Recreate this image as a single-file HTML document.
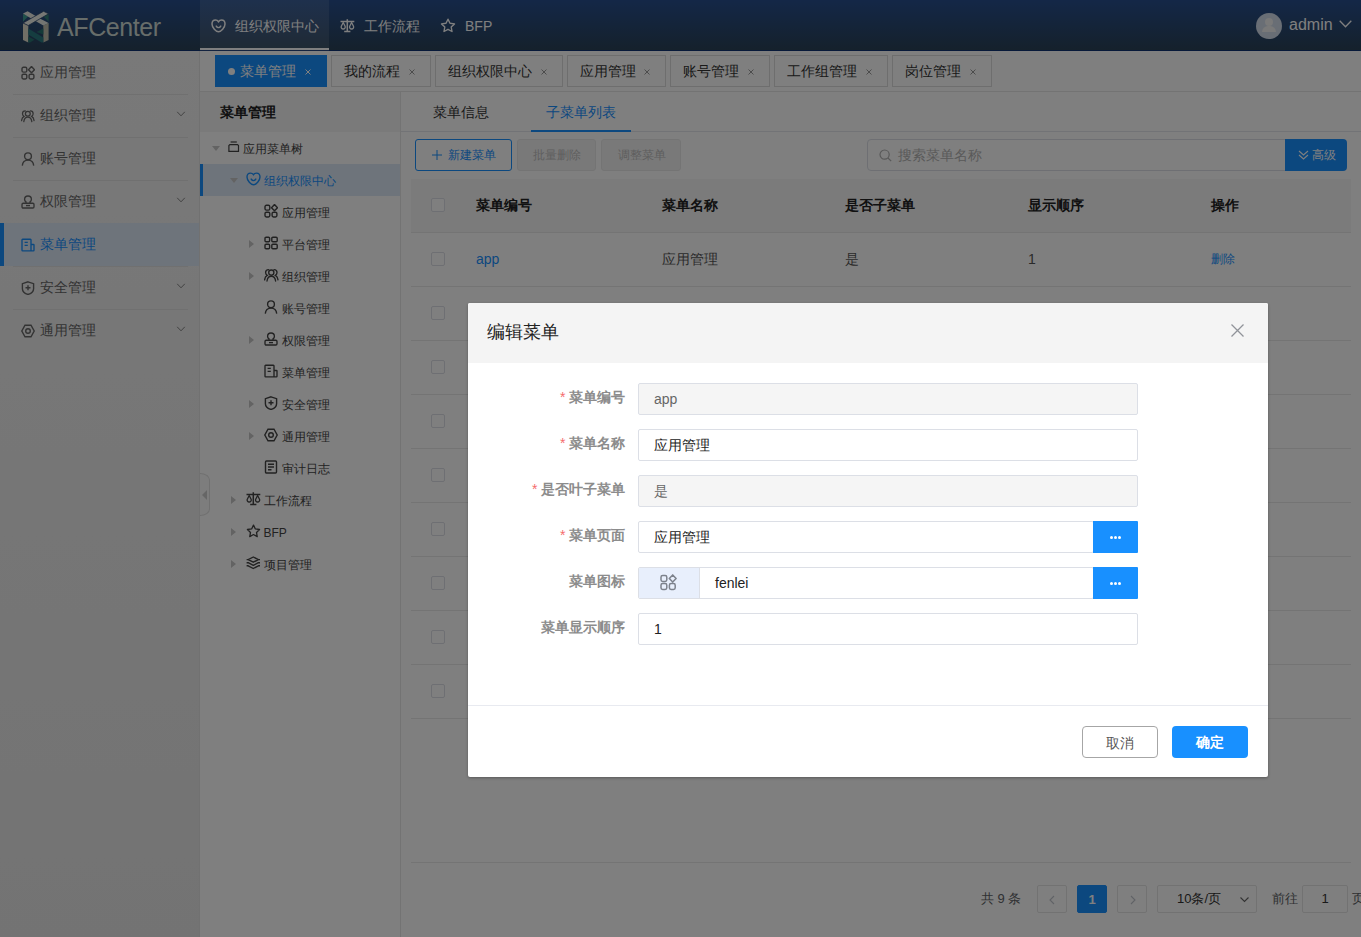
<!DOCTYPE html>
<html><head><meta charset="utf-8">
<style>
*{box-sizing:border-box;margin:0;padding:0}
html,body{width:1361px;height:937px;overflow:hidden;background:#fff;font-family:"Liberation Sans",sans-serif;font-size:14px;color:#333}
.a{position:absolute}
#hdr{left:0;top:0;width:1361px;height:51px;background:linear-gradient(to bottom,#284f8f,#2a4258);border-bottom:1px solid #0e3273}
#side{left:0;top:51px;width:200px;height:886px;background:linear-gradient(to bottom,#f2f2f2,#e7e7e7);border-right:1px solid #e2e2e2}
.mi{position:absolute;left:0;width:199px;height:43px;color:#666;font-size:14px}
.mi .t{position:absolute;left:40px;top:0;line-height:43px}
.mi .ic{position:absolute;left:21px;top:15px;width:14px;height:14px}
.mi .dv{position:absolute;left:13px;right:11px;top:0;height:1px;background:#e0e0e0}
.mi .ch{position:absolute;left:176px;top:17px;color:#777}
.sel{background:#dde9f6;color:#1890ff}
.sel:before{content:"";position:absolute;left:0;top:0;width:4px;height:43px;background:#1890ff}
svg{display:block}

.tab{position:absolute;top:4px;height:32px;border:1px solid #dcdcdc;background:#fff;color:#333;font-size:14px}
.tab span{position:absolute;left:12px;top:0;line-height:30px;white-space:nowrap}
.tab .x{position:absolute;right:15px;top:13px;color:#999;width:6px;height:6px}
.tab.act{background:#1890ff;border-color:#1890ff;color:#fff}
.tab.act .x{color:#fff}
.tab .dot{position:absolute;left:12px;top:12px;width:7px;height:7px;border-radius:50%;background:#fff}

.tr{position:absolute;left:0;width:200px;height:32px;color:#444;font-size:12px}
.tr span{position:absolute;top:1px;line-height:32px;white-space:nowrap}
.tr .tic{position:absolute;top:8px;margin-left:1px}
.tri-d{position:absolute;top:14px;width:0;height:0;border-left:4px solid transparent;border-right:4px solid transparent;border-top:5px solid #c6c6c6}
.tri-r{position:absolute;top:12px;width:0;height:0;border-top:4px solid transparent;border-bottom:4px solid transparent;border-left:5px solid #c6c6c6}
.sel2{background:#dde9f6;color:#1890ff}
.sel2:before{content:"";position:absolute;left:0;top:0;width:3px;height:32px;background:#1890ff}

.btn{position:absolute;top:47px;height:32px;border:1px solid #e4e4e4;border-radius:3px;font-size:12px;background:#fff}
.btn span{position:absolute;top:0;line-height:30px;white-space:nowrap}
.btn.dis{background:#f3f3f3;color:#bdbdbd;border-color:#e9e9e9}
.cb{position:absolute;left:30px;width:14px;height:14px;border:1px solid #dcdfe6;border-radius:2px;background:#fff}
.th{line-height:54px;font-weight:bold;color:#222;font-size:14px;white-space:nowrap}
.td{line-height:53px;color:#555;font-size:14px;white-space:nowrap}
.pg{position:absolute;top:793px;width:30px;height:28px;border:1px solid #e4e4e4;border-radius:2px;background:#fff}

.flab{position:absolute;right:643px;height:32px;line-height:29px;font-size:14px;font-weight:bold;color:#8c8c8c;white-space:nowrap}
.req{height:32px;line-height:29px;color:#f56c6c;font-size:14px}
.inp{position:absolute;left:170px;width:500px;height:32px;border:1px solid #dcdfe6;border-radius:2px;background:#fff;color:#222;font-size:14px;overflow:hidden}
.inp span{position:absolute;top:0;line-height:30px;white-space:nowrap}
.dots{position:absolute;left:625px;width:45px;height:32px;background:#1890ff;border-radius:0 1px 1px 0}
.dots i{position:absolute;top:15px;width:3px;height:3px;border-radius:50%;background:#fff}
.dots i:nth-child(1){left:17px}.dots i:nth-child(2){left:21px}.dots i:nth-child(3){left:25px}
.mbtn{height:32px;border-radius:4px;text-align:center;line-height:33px;font-size:14px}
</style></head><body>
<div id="hdr" class="a">
 <svg class="a" style="left:23px;top:11px" width="26" height="32" viewBox="0 0 26 32">
  <polygon points="0,2.8 5.3,5.3 0,10.8" fill="#3f9d92"/>
  <polygon points="25.6,2.8 20.3,5.3 25.6,10.8" fill="#338078"/>
  <polygon points="0,12 5.3,14.5 5.3,31.5 0,29" fill="#e2dfcc"/>
  <polygon points="25.6,12 20.3,14.5 20.3,31.5 25.6,29" fill="#c2c1ae"/>
  <polygon points="5.3,17.5 20.3,26.5 20.3,31.5 18.5,31.5 5.3,23.5" fill="#2a7a80"/>
  <polygon points="20.3,17.5 20.3,23.5 13.5,21" fill="#297470"/>
  <polygon points="5.3,31.5 5.3,25.5 11.5,28.8 7,31.5" fill="#297470"/>
  <polygon points="0,2.6 4.6,0.3 14,5.8 9.4,8.2" fill="#e8ebe5"/>
  <polygon points="16.2,7.2 20.8,9.5 25.6,12 20.3,14.5 11.6,9.6" fill="#e8ebe5"/>
  <polygon points="20.6,0.3 25.6,2.8 5.3,14.5 0,12" fill="#eef0ea" stroke="#213f6c" stroke-width="0.7"/>
 </svg>
 <div class="a" style="left:57px;top:10px;font-size:25px;line-height:34px;color:#cfdad4;letter-spacing:-0.4px">AFCenter</div>
 <div class="a" style="left:200px;top:0;width:129px;height:51px;background:rgba(255,255,255,.1)"></div>
 <div class="a" style="left:200px;top:48px;width:129px;height:2px;background:#fff"></div>
 <svg class="a" style="left:211px;top:19px" width="15" height="14" viewBox="0 0 15 14"><path d="M7.5 2.7C6.8 1.7 5.8 1.1 4.5 1.1 2.6 1.1 1 2.7 1 5.1c0 3.6 4 7.7 6.5 7.7s6.5-4.1 6.5-7.7c0-2.4-1.6-4-3.5-4-1.3 0-2.3.6-3 1.6z" fill="none" stroke="#fff" stroke-width="1.5"/><path d="M5.2 7.1c.6 1 1.4 1.5 2.3 1.5s1.7-.5 2.3-1.5" fill="none" stroke="#fff" stroke-width="1.4" stroke-linecap="round"/></svg>
 <div class="a" style="left:235px;top:1px;line-height:51px;color:#fff;font-size:14px">组织权限中心</div>
 <svg class="a" style="left:340px;top:19px" width="15" height="14" viewBox="0 0 15 14"><use href="#i-scale" style="color:#fff"/></svg>
 <div class="a" style="left:364px;top:1px;line-height:51px;color:#fff;font-size:14px">工作流程</div>
 <svg class="a" style="left:440px;top:18px" width="16" height="15" viewBox="0 0 16 15"><path d="M8 1.2l2 4.1 4.5.6-3.3 3.1.8 4.5L8 11.3l-4 2.2.8-4.5L1.5 5.9l4.5-.6z" fill="none" stroke="#fff" stroke-width="1.4" stroke-linejoin="round"/></svg>
 <div class="a" style="left:465px;top:1px;line-height:51px;color:#fff;font-size:14px">BFP</div>
 <div class="a" style="left:1256px;top:13px;width:26px;height:26px;border-radius:50%;background:#d2dcea;overflow:hidden">
  <div class="a" style="left:9px;top:5px;width:8px;height:8px;border-radius:50%;background:#f2f2f2"></div>
  <div class="a" style="left:6px;top:13px;width:14px;height:6px;border-radius:7px 7px 0 0;background:#f2f2f2"></div>
 </div>
 <div class="a" style="left:1289px;top:9px;line-height:32px;color:#fff;font-size:16px">admin</div>
 <svg class="a" style="left:1339px;top:20px" width="13" height="8" viewBox="0 0 13 8"><path d="M.7.7l5.8 6 5.8-6" fill="none" stroke="#fff" stroke-width="1.3"/></svg>
</div>
<svg width="0" height="0" style="position:absolute">
<defs>
<symbol id="i-grid" viewBox="0 0 14 14"><g fill="none" stroke="currentColor" stroke-width="1.4" stroke-linejoin="round"><rect x="1" y="1.3" width="4.8" height="4.8" rx="1.4"/><path d="M10.5.6l3 3.1-3 3.1-3-3.1z"/><rect x="1" y="8.2" width="4.8" height="4.8" rx="1.4"/><rect x="8.1" y="8.2" width="4.8" height="4.8" rx="1.4"/></g></symbol>
<symbol id="i-grid2" viewBox="0 0 14 14"><g fill="none" stroke="currentColor" stroke-width="1.4"><rect x="1" y="1.2" width="4.6" height="4.6" rx="1.1"/><rect x="7.8" y="1.2" width="5.4" height="4.6" rx="1.1"/><rect x="1" y="8.2" width="4.6" height="4.6" rx="1.1"/><rect x="7.8" y="8.2" width="5.4" height="4.6" rx="1.1"/></g></symbol>
<symbol id="i-group" viewBox="0 0 15 14"><g fill="none" stroke="currentColor" stroke-width="1.35" stroke-linecap="round"><circle cx="7.3" cy="4.6" r="2.6"/><path d="M3 13c.4-3 2.1-4.8 4.3-4.8s3.9 1.8 4.3 4.8"/><path d="M4.6 1.6C2.9 1.6 1.6 3 1.6 4.6c0 1.2.6 2.2 1.6 2.8C1.7 8.2.8 9.8.6 11.9"/><path d="M10 1.6c1.7 0 3 1.4 3 3 0 1.2-.6 2.2-1.6 2.8 1.5.8 2.4 2.4 2.6 4.5"/></g></symbol>
<symbol id="i-user" viewBox="0 0 14 14"><g fill="none" stroke="currentColor" stroke-width="1.4"><circle cx="7" cy="4.3" r="3.4"/><path d="M1.3 13.6c.3-3.4 2.7-5.5 5.7-5.5s5.4 2.1 5.7 5.5"/></g></symbol>
<symbol id="i-stamp" viewBox="0 0 14 14"><g fill="none" stroke="currentColor" stroke-width="1.35"><path d="M5 8.2V6.9C4 6.3 3.6 5.4 3.6 4.4 3.6 2.4 5.1 1 7 1s3.4 1.4 3.4 3.4c0 1-.4 1.9-1.4 2.5v1.3"/><rect x="1" y="8.2" width="12" height="4.8" rx="1.2"/><path d="M5 10.6h4"/></g></symbol>
<symbol id="i-doc" viewBox="0 0 14 14"><g fill="none" stroke="currentColor" stroke-width="1.35" stroke-linejoin="round"><path d="M10 12.8H1.6a.6.6 0 0 1-.6-.6V1.8a.6.6 0 0 1 .6-.6h7.8a.6.6 0 0 1 .6.6zM10 6.5h2.4a.6.6 0 0 1 .6.6v5.1a.6.6 0 0 1-.6.6H10"/><path d="M3.6 4.3h3.2M3.6 7.4h3.2"/></g></symbol>
<symbol id="i-shield" viewBox="0 0 14 14"><g fill="none" stroke="currentColor" stroke-width="1.4"><path d="M7 .8l5.6 1.9v5c0 2.8-2.2 4.7-5.6 5.8C3.6 12.4 1.4 10.5 1.4 7.7v-5z"/><path d="M7 4.3v5M4.5 6.8h5"/></g></symbol>
<symbol id="i-nut" viewBox="0 0 14 14"><g fill="none" stroke="currentColor" stroke-width="1.4"><path d="M4 1.2h6L13.2 7 10 12.8H4L.8 7z"/><circle cx="7" cy="7" r="2.3"/></g></symbol>
<symbol id="i-heart" viewBox="0 0 15 14"><g fill="none" stroke="currentColor" stroke-width="1.4"><path d="M7.5 2.7C6.8 1.7 5.8 1.1 4.5 1.1 2.6 1.1 1 2.7 1 5.1c0 3.6 4 7.7 6.5 7.7s6.5-4.1 6.5-7.7c0-2.4-1.6-4-3.5-4-1.3 0-2.3.6-3 1.6z"/><path d="M5.2 7.1c.6 1 1.4 1.5 2.3 1.5s1.7-.5 2.3-1.5" stroke-linecap="round"/></g></symbol>
<symbol id="i-scale" viewBox="0 0 15 14"><g fill="none" stroke="currentColor"><path d="M7.3 .3v12.4M0.5 2.6h13.8M4.2 12.6h6.2" stroke-width="1.5"/><path d="M3.2 3.5L1.3 7.2A2.05 2.05 0 1 0 5.1 7.2ZM11.6 3.5L9.7 7.2A2.05 2.05 0 1 0 13.5 7.2Z" stroke-width="1.3" stroke-linejoin="round"/></g></symbol>
<symbol id="i-star" viewBox="0 0 16 15"><path d="M8 1.2l2 4.1 4.5.6-3.3 3.1.8 4.5L8 11.3l-4 2.2.8-4.5L1.5 5.9l4.5-.6z" fill="none" stroke="currentColor" stroke-width="1.4" stroke-linejoin="round"/></symbol>
<symbol id="i-log" viewBox="0 0 14 14"><g fill="none" stroke="currentColor" stroke-width="1.4"><rect x="1.5" y="1" width="11" height="12" rx="1"/><path d="M4 4.2h6M4 7h6M4 9.8h3.5"/></g></symbol>
<symbol id="i-layers" viewBox="0 0 15 14"><g fill="none" stroke="currentColor" stroke-width="1.4" stroke-linejoin="round"><path d="M.6 3.6h1.6L7.3 1l5.1 2.6H14M2.2 3.6l5.1 2.6 5.1-2.6"/><path d="M.6 6.7h1.6l5.1 2.6 5.1-2.6H14"/><path d="M.6 9.8h1.6l5.1 2.7 5.1-2.7H14"/></g></symbol>
<symbol id="i-box" viewBox="0 0 12 12"><g fill="none" stroke="currentColor" stroke-width="1.2"><path d="M2.6 1h6.2"/><path d="M1.9 3.6h7.6l1 1v5.8H.9V4.6z"/></g></symbol>
<symbol id="i-chev" viewBox="0 0 12 8"><path d="M.8 1l5.2 5.4L11.2 1" fill="none" stroke="currentColor" stroke-width="1.2"/></symbol>
</defs></svg>
<div id="side" class="a"><div class="mi" style="top:0px"><svg class="ic"><use href="#i-grid"/></svg><span class="t">应用管理</span></div><div class="mi" style="top:43px"><div class="dv"></div><svg class="ic"><use href="#i-group"/></svg><span class="t">组织管理</span><svg class="ch" width="10" height="6" viewBox="0 0 12 8"><use href="#i-chev"/></svg></div><div class="mi" style="top:86px"><div class="dv"></div><svg class="ic"><use href="#i-user"/></svg><span class="t">账号管理</span></div><div class="mi" style="top:129px"><div class="dv"></div><svg class="ic"><use href="#i-stamp"/></svg><span class="t">权限管理</span><svg class="ch" width="10" height="6" viewBox="0 0 12 8"><use href="#i-chev"/></svg></div><div class="mi sel" style="top:172px"><svg class="ic"><use href="#i-doc"/></svg><span class="t">菜单管理</span></div><div class="mi" style="top:215px"><div class="dv"></div><svg class="ic"><use href="#i-shield"/></svg><span class="t">安全管理</span><svg class="ch" width="10" height="6" viewBox="0 0 12 8"><use href="#i-chev"/></svg></div><div class="mi" style="top:258px"><div class="dv"></div><svg class="ic"><use href="#i-nut"/></svg><span class="t">通用管理</span><svg class="ch" width="10" height="6" viewBox="0 0 12 8"><use href="#i-chev"/></svg></div></div>
<div id="tabbar" class="a" style="left:200px;top:51px;width:1161px;height:41px;background:#fff;border-bottom:1px solid #e6e6e6"><div class="tab act" style="left:15px;width:112px"><i class="dot"></i><span style="left:24px">菜单管理</span><b class="x"><svg width="6" height="6" viewBox="0 0 6 6"><path d="M.5.5l5 5M5.5.5l-5 5" stroke="currentColor" stroke-width="1"/></svg></b></div><div class="tab" style="left:131px;width:100px"><span>我的流程</span><b class="x"><svg width="6" height="6" viewBox="0 0 6 6"><path d="M.5.5l5 5M5.5.5l-5 5" stroke="currentColor" stroke-width="1"/></svg></b></div><div class="tab" style="left:235px;width:128px"><span>组织权限中心</span><b class="x"><svg width="6" height="6" viewBox="0 0 6 6"><path d="M.5.5l5 5M5.5.5l-5 5" stroke="currentColor" stroke-width="1"/></svg></b></div><div class="tab" style="left:367px;width:99px"><span>应用管理</span><b class="x"><svg width="6" height="6" viewBox="0 0 6 6"><path d="M.5.5l5 5M5.5.5l-5 5" stroke="currentColor" stroke-width="1"/></svg></b></div><div class="tab" style="left:470px;width:100px"><span>账号管理</span><b class="x"><svg width="6" height="6" viewBox="0 0 6 6"><path d="M.5.5l5 5M5.5.5l-5 5" stroke="currentColor" stroke-width="1"/></svg></b></div><div class="tab" style="left:574px;width:114px"><span>工作组管理</span><b class="x"><svg width="6" height="6" viewBox="0 0 6 6"><path d="M.5.5l5 5M5.5.5l-5 5" stroke="currentColor" stroke-width="1"/></svg></b></div><div class="tab" style="left:692px;width:100px"><span>岗位管理</span><b class="x"><svg width="6" height="6" viewBox="0 0 6 6"><path d="M.5.5l5 5M5.5.5l-5 5" stroke="currentColor" stroke-width="1"/></svg></b></div></div>
<div id="tree" class="a" style="left:200px;top:92px;width:201px;height:845px;background:#fff;border-right:1px solid #e6e6e6"><div class="a" style="left:0;top:0;width:200px;height:40px;background:#f5f5f5"></div><div class="a" style="left:20px;top:0;line-height:40px;font-weight:bold;color:#222;font-size:14px">菜单管理</div><div class="tr" style="top:40px"><i class="tri-d" style="left:11.5px"></i><svg class="tic" style="left:27px;top:9px" width="12" height="12" viewBox="0 0 12 12"><use href="#i-box"/></svg><span style="left:42.5px">应用菜单树</span></div><div class="tr sel2" style="top:72px"><i class="tri-d" style="left:29.5px"></i><svg class="tic" style="left:45px" width="15" height="14"><use href="#i-heart"/></svg><span style="left:63.5px">组织权限中心</span></div><div class="tr" style="top:104px"><svg class="tic" style="left:63px" width="14" height="14"><use href="#i-grid"/></svg><span style="left:81.5px">应用管理</span></div><div class="tr" style="top:136px"><i class="tri-r" style="left:49.0px"></i><svg class="tic" style="left:63px" width="14" height="14"><use href="#i-grid2"/></svg><span style="left:81.5px">平台管理</span></div><div class="tr" style="top:168px"><i class="tri-r" style="left:49.0px"></i><svg class="tic" style="left:63px" width="15" height="14"><use href="#i-group"/></svg><span style="left:81.5px">组织管理</span></div><div class="tr" style="top:200px"><svg class="tic" style="left:63px" width="14" height="14"><use href="#i-user"/></svg><span style="left:81.5px">账号管理</span></div><div class="tr" style="top:232px"><i class="tri-r" style="left:49.0px"></i><svg class="tic" style="left:63px" width="14" height="14"><use href="#i-stamp"/></svg><span style="left:81.5px">权限管理</span></div><div class="tr" style="top:264px"><svg class="tic" style="left:63px" width="14" height="14"><use href="#i-doc"/></svg><span style="left:81.5px">菜单管理</span></div><div class="tr" style="top:296px"><i class="tri-r" style="left:49.0px"></i><svg class="tic" style="left:63px" width="14" height="14"><use href="#i-shield"/></svg><span style="left:81.5px">安全管理</span></div><div class="tr" style="top:328px"><i class="tri-r" style="left:49.0px"></i><svg class="tic" style="left:63px" width="14" height="14"><use href="#i-nut"/></svg><span style="left:81.5px">通用管理</span></div><div class="tr" style="top:360px"><svg class="tic" style="left:63px" width="14" height="14"><use href="#i-log"/></svg><span style="left:81.5px">审计日志</span></div><div class="tr" style="top:392px"><i class="tri-r" style="left:31.0px"></i><svg class="tic" style="left:45px" width="15" height="14"><use href="#i-scale"/></svg><span style="left:63.5px">工作流程</span></div><div class="tr" style="top:424px"><i class="tri-r" style="left:31.0px"></i><svg class="tic" style="left:45px" width="15" height="14"><use href="#i-star"/></svg><span style="left:63.5px">BFP</span></div><div class="tr" style="top:456px"><i class="tri-r" style="left:31.0px"></i><svg class="tic" style="left:45px" width="15" height="14"><use href="#i-layers"/></svg><span style="left:63.5px">项目管理</span></div></div>
<div id="content" class="a" style="left:401px;top:92px;width:960px;height:845px;background:#fff"><div class="a" style="left:0;top:39px;width:960px;height:1px;background:#e4e7ed"></div><div class="a" style="left:32px;top:0;line-height:40px;color:#333">菜单信息</div><div class="a" style="left:145px;top:0;line-height:40px;color:#1890ff">子菜单列表</div><div class="a" style="left:130px;top:38px;width:100px;height:2px;background:#1890ff"></div><div class="btn" style="left:14px;width:97px;border-color:#1890ff;color:#1890ff"><svg class="a" style="left:16px;top:10px" width="10" height="10" viewBox="0 0 10 10"><path d="M5 0v10M0 5h10" stroke="currentColor" stroke-width="1"/></svg><span style="left:32px">新建菜单</span></div><div class="btn dis" style="left:116px;width:79px"><span style="left:15px">批量删除</span></div><div class="btn dis" style="left:200px;width:80px"><span style="left:16px">调整菜单</span></div><div class="a" style="left:466px;top:47px;width:421px;height:32px;border:1px solid #dcdfe6;border-radius:4px 0 0 4px;background:#fff"></div><svg class="a" style="left:478px;top:57px" width="13" height="13" viewBox="0 0 13 13"><circle cx="5.6" cy="5.6" r="4.6" fill="none" stroke="#b0b0b0" stroke-width="1.2"/><path d="M9 9l3.2 3.2" stroke="#b0b0b0" stroke-width="1.2"/></svg><div class="a" style="left:497px;top:47px;line-height:32px;color:#b4b4b4;font-size:14px">搜索菜单名称</div><div class="a" style="left:884px;top:47px;width:62px;height:32px;background:#1890ff;border-radius:0 4px 4px 0;color:#fff;font-size:13px"><svg class="a" style="left:13px;top:11px" width="11" height="10" viewBox="0 0 11 10"><path d="M1 1l4.5 4 4.5-4M1 5l4.5 4 4.5-4" fill="none" stroke="#fff" stroke-width="1.1"/></svg><span class="a" style="left:27px;top:0;line-height:32px;font-size:12px">高级</span></div><div class="a" style="left:10px;top:87px;width:940px;height:54px;background:#f6f6f6;border-bottom:1px solid #e8e8e8"></div><div class="cb" style="top:106px"></div><div class="a th" style="left:75px;top:86px">菜单编号</div><div class="a th" style="left:261px;top:86px">菜单名称</div><div class="a th" style="left:444px;top:86px">是否子菜单</div><div class="a th" style="left:627px;top:86px">显示顺序</div><div class="a th" style="left:810px;top:86px">操作</div><div class="a" style="left:10px;top:194px;width:940px;height:1px;background:#e8e8e8"></div><div class="cb" style="top:160px"></div><div class="a" style="left:10px;top:248px;width:940px;height:1px;background:#e8e8e8"></div><div class="cb" style="top:214px"></div><div class="a" style="left:10px;top:302px;width:940px;height:1px;background:#e8e8e8"></div><div class="cb" style="top:268px"></div><div class="a" style="left:10px;top:356px;width:940px;height:1px;background:#e8e8e8"></div><div class="cb" style="top:322px"></div><div class="a" style="left:10px;top:410px;width:940px;height:1px;background:#e8e8e8"></div><div class="cb" style="top:376px"></div><div class="a" style="left:10px;top:464px;width:940px;height:1px;background:#e8e8e8"></div><div class="cb" style="top:430px"></div><div class="a" style="left:10px;top:518px;width:940px;height:1px;background:#e8e8e8"></div><div class="cb" style="top:484px"></div><div class="a" style="left:10px;top:572px;width:940px;height:1px;background:#e8e8e8"></div><div class="cb" style="top:538px"></div><div class="a" style="left:10px;top:626px;width:940px;height:1px;background:#e8e8e8"></div><div class="cb" style="top:592px"></div><div class="a td" style="left:75px;top:141px;color:#1890ff">app</div><div class="a td" style="left:261px;top:141px">应用管理</div><div class="a td" style="left:444px;top:141px">是</div><div class="a td" style="left:627px;top:141px">1</div><div class="a td" style="left:810px;top:141px;color:#1890ff;font-size:12px">删除</div><div class="a" style="left:10px;top:770px;width:940px;height:1px;background:#e8e8e8"></div><div class="a" style="left:580px;top:793px;line-height:28px;color:#606266;font-size:13px">共 9 条</div><div class="pg" style="left:636px"><svg class="a" style="left:11px;top:9px" width="6" height="10" viewBox="0 0 6 10"><path d="M5 1L1 5l4 4" fill="none" stroke="#c0c4cc" stroke-width="1.1"/></svg></div><div class="pg" style="left:676px;background:#1890ff;border-color:#1890ff;color:#fff;font-weight:bold;text-align:center;line-height:28px;font-size:13px">1</div><div class="pg" style="left:716px"><svg class="a" style="left:12px;top:9px" width="6" height="10" viewBox="0 0 6 10"><path d="M1 1l4 4-4 4" fill="none" stroke="#c0c4cc" stroke-width="1.1"/></svg></div><div class="pg" style="left:756px;width:100px;font-size:13px;color:#333"><span class="a" style="left:19px;top:0;line-height:26px">10条/页</span><svg class="a" style="left:82px;top:11px" width="9" height="6" viewBox="0 0 9 6"><path d="M.5.5l4 4 4-4" fill="none" stroke="#666" stroke-width="1.1"/></svg></div><div class="a" style="left:871px;top:793px;line-height:28px;color:#606266;font-size:13px">前往</div><div class="pg" style="left:901px;width:46px;text-align:center;line-height:26px;font-size:13px;color:#333">1</div><div class="a" style="left:951px;top:793px;line-height:28px;color:#606266;font-size:13px">页</div></div>
<div class="a" style="left:200px;top:473px;width:10px;height:43px;background:#fbfbfb;border:1px solid #e0e0e0;border-left:none;border-radius:0 10px 10px 0/0 7px 7px 0"><i class="a" style="left:2px;top:16px;width:0;height:0;border-top:5px solid transparent;border-bottom:5px solid transparent;border-right:5px solid #cdcdcd"></i></div>
<div id="overlay" class="a" style="left:0;top:0;width:1361px;height:937px;background:rgba(0,0,0,.5)"></div>
<div id="modal" class="a" style="left:468px;top:303px;width:800px;height:474px;background:#fff;border-radius:2px;box-shadow:0 1px 3px rgba(0,0,0,.3);overflow:hidden"><div class="a" style="left:0;top:0;width:800px;height:60px;background:#f4f4f4"></div><div class="a" style="left:19px;top:0;line-height:58px;font-size:18px;color:#222">编辑菜单</div><svg class="a" style="left:762px;top:20px" width="15" height="15" viewBox="0 0 15 15"><path d="M1.5 1.5l12 12M13.5 1.5l-12 12" stroke="#909399" stroke-width="1.3"/></svg><div class="flab" style="top:80px">菜单编号</div><div class="a req" style="left:92px;top:80px">*</div><div class="inp" style="top:80px;background:#f5f5f5;color:#666"><span style="left:15px">app</span></div><div class="flab" style="top:126px">菜单名称</div><div class="a req" style="left:92px;top:126px">*</div><div class="inp" style="top:126px"><span style="left:15px">应用管理</span></div><div class="flab" style="top:172px">是否叶子菜单</div><div class="a req" style="left:64px;top:172px">*</div><div class="inp" style="top:172px;background:#f5f5f5;color:#666"><span style="left:15px">是</span></div><div class="flab" style="top:218px">菜单页面</div><div class="a req" style="left:92px;top:218px">*</div><div class="inp" style="top:218px;width:456px"><span style="left:15px">应用管理</span></div><div class="dots" style="top:218px"><i></i><i></i><i></i></div><div class="flab" style="top:264px">菜单图标</div><div class="inp" style="top:264px;width:456px"><div class="a" style="left:0;top:0;width:61px;height:30px;background:#e8effc;border-right:1px solid #dcdfe6"></div><svg class="a" style="left:21px;top:6px" width="17" height="17" viewBox="0 0 17 17"><g fill="none" stroke="#7d828c" stroke-width="1.5" stroke-linejoin="round"><rect x="1" y="1.6" width="5.8" height="5.8" rx="1.7"/><path d="M12.7 .9l3.4 3.6-3.4 3.6-3.4-3.6z"/><rect x="1" y="9.6" width="5.8" height="5.8" rx="1.7"/><rect x="9.4" y="9.6" width="5.8" height="5.8" rx="1.7"/></g></svg><span style="left:76px">fenlei</span></div><div class="dots" style="top:264px"><i></i><i></i><i></i></div><div class="flab" style="top:310px">菜单显示顺序</div><div class="inp" style="top:310px"><span style="left:15px">1</span></div><div class="a" style="left:0;top:402px;width:800px;height:1px;background:#e8eaf0"></div><div class="a mbtn" style="left:614px;top:423px;width:76px;border:1px solid #a6a6a6;color:#555">取消</div><div class="a mbtn" style="left:704px;top:423px;width:76px;background:#1890ff;color:#fff;font-weight:bold">确定</div></div>

</body></html>
